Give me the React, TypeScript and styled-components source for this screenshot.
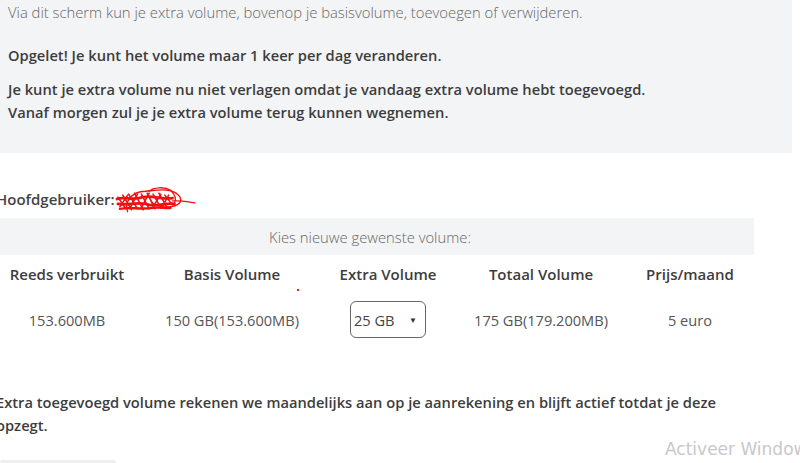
import React from "react";
import styled, { createGlobalStyle } from "styled-components";

const Global = createGlobalStyle`
  html, body { margin: 0; padding: 0; background: #fff; overflow: hidden; }
  body { font-family: "Open Sans", "Noto Sans", sans-serif; color: #444; width: 800px; height: 463px; position: relative; }
`;

const Page = styled.div`
  width: 800px;
  height: 463px;
  overflow: hidden;
  position: relative;
`;

const InfoPanel = styled.section`
  width: 792px;
  height: 153px;
  box-sizing: border-box;
  background: #f3f4f6;
  padding: 2px 8px 0 8px;
`;

const Intro = styled.p`
  margin: 0;
  font-size: 14.8px;
  font-weight: 300;
  color: #666;
  line-height: 20px;
`;

const Warning = styled.p<{ $top: number }>`
  margin: ${(p) => p.$top}px 0 0 0;
  font-size: 14.7px;
  font-weight: 600;
  color: #3d3d3d;
  line-height: 23px;
`;

const Content = styled.div`
  margin-left: -4px;
  padding-top: 34px;
`;

const UserLine = styled.div`
  display: flex;
  align-items: center;
  font-size: 15px;
  font-weight: 600;
  color: #444;
  height: 24px;
`;

const Scribble = styled.svg`
  width: 82px;
  height: 30px;
  margin-left: -1px;
  margin-top: 1px;
`;

const Table = styled.div`
  margin-top: 7px;
  margin-left: 4px;
  width: 754px;
`;

const Caption = styled.div`
  background: #f3f4f6;
  height: 37px;
  box-sizing: border-box;
  padding-right: 14px;
  display: flex;
  align-items: center;
  justify-content: center;
  font-size: 14.8px;
  font-weight: 300;
  color: #666;
`;

const Row = styled.div<{ $h: number }>`
  display: grid;
  grid-template-columns: 134px 196px 116px 190px 108px;
  height: ${(p) => p.$h}px;
  align-items: center;
`;

const Head = styled.div`
  text-align: center;
  font-size: 15px;
  font-weight: 600;
  color: #3d3d3d;
`;

const Cell = styled.div`
  text-align: center;
  font-size: 14.6px;
  font-weight: 400;
  color: #555;
  position: relative;
`;

const Select = styled.div`
  width: 76px;
  height: 37px;
  box-sizing: border-box;
  margin: 0 auto;
  border: 1px solid #666;
  border-radius: 6px;
  display: flex;
  align-items: center;
  justify-content: space-between;
  padding: 0 8px 0 3px;
  font-size: 14.6px;
  color: #444;
`;

const Arrow = styled.span`
  font-size: 8px;
  color: #333;
`;

const RedDot = styled.span`
  position: absolute;
  right: 31px;
  top: -21px;
  width: 2px;
  height: 2px;
  background: #e21;
`;

const Note = styled.p`
  margin: 45px 0 0 0;
  font-size: 14.7px;
  font-weight: 600;
  color: #3d3d3d;
  line-height: 23px;
  width: 730px;
`;

const ButtonEdge = styled.div`
  position: absolute;
  left: 0;
  top: 460px;
  width: 116px;
  height: 6px;
  background: #eee;
  border-radius: 3px 3px 0 0;
`;

const Watermark = styled.div`
  position: absolute;
  left: 665px;
  top: 439px;
  font-family: "DejaVu Sans", sans-serif;
  font-size: 17px;
  color: #c8c8c8;
  white-space: nowrap;
`;

export default function App() {
  return (
    <Page>
      <Global />
      <InfoPanel>
        <Intro>Via dit scherm kun je extra volume, bovenop je basisvolume, toevoegen of verwijderen.</Intro>
        <Warning $top={22}>Opgelet! Je kunt het volume maar 1 keer per dag veranderen.</Warning>
        <Warning $top={11}>
          Je kunt je extra volume nu niet verlagen omdat je vandaag extra volume hebt toegevoegd.
          <br />
          Vanaf morgen zul je je extra volume terug kunnen wegnemen.
        </Warning>
      </InfoPanel>
      <Content>
        <UserLine>
          Hoofdgebruiker:
          <Scribble viewBox="0 0 84 30">
            <g fill="none" stroke="#f01010" strokeLinecap="round" strokeLinejoin="round">
              <path strokeWidth="2.8" d="M3 14 C10 11, 20 16, 30 12 C40 10, 50 15, 60 13" />
              <path strokeWidth="2.8" d="M4 19 C14 21, 26 16, 36 20 C46 22, 54 17, 62 19" />
              <path strokeWidth="2.4" d="M6 24 C16 22, 28 25, 40 23 C48 22, 54 24, 58 23" />
              <path strokeWidth="1.6" d="M4 12 L12 24 M9 10 L18 25 M15 9 L24 24 M21 8 L30 25 M28 9 L36 24 M34 8 L42 24 M40 9 L48 23 M46 8 L54 22 M52 10 L60 20" />
              <path strokeWidth="1.6" d="M6 22 L14 10 M16 24 L24 9 M28 23 L36 8 M40 22 L48 9 M50 21 L56 10" />
              <path strokeWidth="1.4" d="M14 27 C10 18, 18 6, 32 6 C44 5, 58 2, 66 10 C72 16, 66 22, 54 22 C46 22, 40 20, 38 16" />
              <path strokeWidth="1.3" d="M36 6 C40 2, 52 1, 58 5 C62 9, 64 14, 62 18" />
              <path strokeWidth="1.3" d="M60 16 C68 15, 76 17, 83 18" />
            </g>
          </Scribble>
        </UserLine>
        <Table>
          <Caption>Kies nieuwe gewenste volume:</Caption>
          <Row $h={38}>
            <Head>Reeds verbruikt</Head>
            <Head>Basis Volume</Head>
            <Head>Extra Volume</Head>
            <Head>Totaal Volume</Head>
            <Head>Prijs/maand</Head>
          </Row>
          <Row $h={53}>
            <Cell>153.600MB</Cell>
            <Cell>
              150 GB(153.600MB)
              <RedDot />
            </Cell>
            <Cell>
              <Select>
                25 GB <Arrow>▼</Arrow>
              </Select>
            </Cell>
            <Cell>175 GB(179.200MB)</Cell>
            <Cell>5 euro</Cell>
          </Row>
        </Table>
        <Note>Extra toegevoegd volume rekenen we maandelijks aan op je aanrekening en blijft actief totdat je deze opzegt.</Note>
      </Content>
      <ButtonEdge />
      <Watermark>Activeer Windows</Watermark>
    </Page>
  );
}
